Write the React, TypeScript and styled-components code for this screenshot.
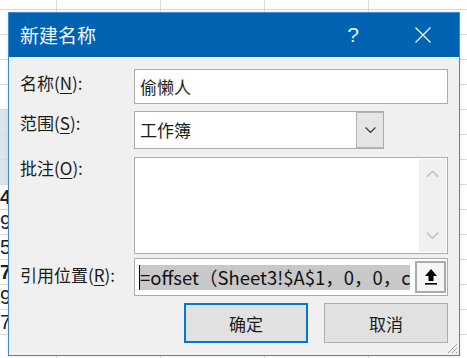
import React from 'react';
import styled, { createGlobalStyle } from 'styled-components';

const GlobalStyle = createGlobalStyle`
  html, body { margin: 0; padding: 0; background: #ffffff; }
  body { font-family: "Noto Sans CJK SC", "Noto Sans", sans-serif; }
  * { box-sizing: border-box; }
`;

const FONT = `"Noto Sans CJK SC", "Noto Sans", sans-serif`;

// 背景表格
const Screen = styled.div`
  position: relative;
  width: 467px;
  height: 358px;
  overflow: hidden;
  background: #ffffff;
`;

const Sheet = styled.div`
  display: flex;
  flex-direction: column;
`;

const SheetRow = styled.div<{ $h: number }>`
  display: grid;
  grid-template-columns: 57px 104px 104px 104px 110px;
  height: ${(p) => p.$h}px;
  border-bottom: 1px solid #dcdcdc;
`;

const SheetCell = styled.div<{ $shade?: boolean; $bold?: boolean }>`
  border-right: 1px solid #dcdcdc;
  background: ${(p) => (p.$shade ? '#dde4ec' : 'transparent')};
  font-family: "Liberation Sans", Arial, sans-serif;
  font-size: 20px;
  font-weight: ${(p) => (p.$bold ? 700 : 400)};
  color: #222;
  text-align: right;
  padding-right: 49px;
  line-height: 24px;
`;

// 对话框
const Dialog = styled.div`
  position: absolute;
  left: 8px;
  top: 12px;
  width: 452px;
  height: 344px;
  border: 1px solid #3d8ad2;
  background: #f0f0f0;
  display: flex;
  flex-direction: column;
  box-shadow: 0 0 4px rgba(0, 0, 0, 0.1);
`;

const TitleBar = styled.div`
  height: 44px;
  background: #0063b1;
  display: flex;
  align-items: center;
  padding-left: 11px;
  color: #ffffff;
  font-family: ${FONT};
`;

const Title = styled.div`
  flex: 1;
  font-size: 19px;
  line-height: 24px;
  color: #f2f7fc;
`;

const HelpButton = styled.div`
  width: 30px;
  margin-right: 32px;
  text-align: center;
  font-family: "Liberation Sans", Arial, sans-serif;
  font-size: 21px;
  line-height: 24px;
  color: #e8f0f8;
`;

const CloseButton = styled.div`
  width: 46px;
  height: 44px;
  margin-right: 13px;
  display: flex;
  align-items: center;
  justify-content: center;
`;

const Body = styled.div`
  position: relative;
  flex: 1;
  display: flex;
  flex-direction: column;
  padding: 12px 11px 0 11px;
`;

const FieldRow = styled.div<{ $top: number; $h: number }>`
  display: grid;
  grid-template-columns: 114px 314px;
  height: ${(p) => p.$h}px;
  margin-top: ${(p) => p.$top}px;
`;

const Label = styled.div<{ $pad: number }>`
  padding-top: ${(p) => p.$pad}px;
  font-family: ${FONT};
  font-size: 17px;
  line-height: 22px;
  color: #1b1b1b;
  white-space: nowrap;

  u {
    text-decoration: underline;
    text-underline-offset: 3px;
    text-decoration-thickness: 1px;
  }
`;

const TextBox = styled.div<{ $w?: number }>`
  width: ${(p) => (p.$w ? `${p.$w}px` : '100%')};
  height: 100%;
  background: #ffffff;
  border: 1px solid #acacac;
  display: flex;
  align-items: center;
  padding-left: 5px;
  font-family: ${FONT};
  font-size: 17px;
  color: #1b1b1b;
`;

const BoxText = styled.div`
  flex: 1;
  line-height: 22px;
`;

const DropButton = styled.div`
  width: 27px;
  height: 100%;
  background: #e5e5e5;
  border: 1px solid #b4b4b4;
  border-right: none;
  display: flex;
  align-items: center;
  justify-content: center;
`;

const CommentBox = styled.div`
  height: 100%;
  background: #ffffff;
  border: 1px solid #acacac;
  display: flex;
  justify-content: flex-end;
`;

const ScrollTrack = styled.div`
  width: 27px;
  margin: 1px;
  background: #f0f0f0;
  display: flex;
  flex-direction: column;
  justify-content: space-between;
  align-items: center;
  padding: 11px 0 13px;
`;

const RefBox = styled.div`
  height: 100%;
  background: #ffffff;
  border: 1px solid #acacac;
  display: flex;
  align-items: center;
  padding: 0 1px 0 4px;
`;

const RefText = styled.div`
  flex: 1;
  overflow: hidden;
  white-space: nowrap;
  height: 25px;
  display: flex;
  align-items: center;
  margin-right: 5px;
  font-family: ${FONT};
  font-size: 18.5px;
  color: #111;
`;

const Caret = styled.span`
  display: inline-block;
  flex: none;
  width: 1px;
  height: 25px;
  background: #000;
`;

const Selected = styled.span`
  background: #c8c8c8;
  line-height: 25px;
  height: 25px;
  padding-right: 10px;
`;

const CollapseButton = styled.div`
  width: 31px;
  height: 32px;
  background: #f6f6f6;
  border: 2px solid #ababab;
  display: flex;
  align-items: center;
  justify-content: center;
`;

const ButtonRow = styled.div`
  display: flex;
  justify-content: flex-end;
  gap: 16px;
  margin-top: 7px;
`;

const DialogButton = styled.div<{ $primary?: boolean }>`
  width: 124px;
  height: 40px;
  background: #e1e1e1;
  border: ${(p) => (p.$primary ? '2px solid #0078d7' : '1px solid #adadad')};
  display: flex;
  align-items: center;
  justify-content: center;
  font-family: ${FONT};
  font-size: 17px;
  color: #1b1b1b;
`;

const Grip = styled.svg`
  position: absolute;
  right: 1px;
  bottom: 1px;
`;

const sheetRows: { h: number; num?: string; bold?: boolean; shade?: boolean }[] = [
  { h: 10 },
  { h: 25 },
  { h: 25 },
  { h: 25 },
  { h: 25 },
  { h: 25, shade: true },
  { h: 25, shade: true },
  { h: 25, shade: true },
  { h: 25, num: '4', bold: true },
  { h: 25, num: '9' },
  { h: 25, num: '5' },
  { h: 25, num: '7', bold: true },
  { h: 25, num: '9' },
  { h: 25, num: '7' },
  { h: 25 },
];

const ChevronDown = ({ color = '#333', w = 10 }: { color?: string; w?: number }) => (
  <svg width={w} height={w / 2 + 1} viewBox="0 0 10 6">
    <polyline points="0.5,0.5 5,5 9.5,0.5" fill="none" stroke={color} strokeWidth="1.2" />
  </svg>
);

const ChevronUp = ({ color = '#333', w = 10 }: { color?: string; w?: number }) => (
  <svg width={w} height={w / 2 + 1} viewBox="0 0 10 6">
    <polyline points="0.5,5.5 5,1 9.5,5.5" fill="none" stroke={color} strokeWidth="1.2" />
  </svg>
);

const App = () => {
  return (
    <>
      <GlobalStyle />
      <Screen>
        <Sheet>
          {sheetRows.map((r, i) => (
            <SheetRow key={i} $h={r.h}>
              <SheetCell $shade={r.shade} $bold={r.bold}>
                {r.num}
              </SheetCell>
              <SheetCell />
              <SheetCell />
              <SheetCell />
              <SheetCell />
            </SheetRow>
          ))}
        </Sheet>

        <Dialog>
          <TitleBar>
            <Title>新建名称</Title>
            <HelpButton>?</HelpButton>
            <CloseButton>
              <svg width="16" height="16" viewBox="0 0 16 16">
                <path d="M0.5 0.5 L15.5 15.5 M15.5 0.5 L0.5 15.5" stroke="#f2f7fc" strokeWidth="1.3" />
              </svg>
            </CloseButton>
          </TitleBar>

          <Body>
            <FieldRow $top={0} $h={35}>
              <Label $pad={3}>
                名称(<u>N</u>):
              </Label>
              <TextBox>
                <BoxText>偷懒人</BoxText>
              </TextBox>
            </FieldRow>

            <FieldRow $top={7} $h={38}>
              <Label $pad={1}>
                范围(<u>S</u>):
              </Label>
              <TextBox $w={250}>
                <BoxText>工作簿</BoxText>
                <DropButton>
                  <ChevronDown color="#3a3a3a" w={11} />
                </DropButton>
              </TextBox>
            </FieldRow>

            <FieldRow $top={8} $h={97}>
              <Label $pad={-2}>
                批注(<u>O</u>):
              </Label>
              <CommentBox>
                <ScrollTrack>
                  <ChevronUp color="#c2c2c2" w={13} />
                  <ChevronDown color="#c2c2c2" w={13} />
                </ScrollTrack>
              </CommentBox>
            </FieldRow>

            <FieldRow $top={4} $h={38}>
              <Label $pad={6}>
                引用位置(<u>R</u>):
              </Label>
              <RefBox>
                <RefText>
                  <Caret />
                  <Selected>=offset（Sheet3!$A$1，0，0，c</Selected>
                </RefText>
                <CollapseButton>
                  <svg width="14" height="18" viewBox="0 0 14 18">
                    <path d="M7 1 L1 8 L4.5 8 L4.5 13 L9.5 13 L9.5 8 L13 8 Z" fill="#000" />
                    <rect x="1" y="15" width="12" height="1.6" fill="#000" />
                  </svg>
                </CollapseButton>
              </RefBox>
            </FieldRow>

            <ButtonRow>
              <DialogButton $primary>确定</DialogButton>
              <DialogButton>取消</DialogButton>
            </ButtonRow>

            <Grip width="12" height="12" viewBox="0 0 12 12">
              <path d="M11 2 L2 11 M11 6 L6 11 M11 10 L10 11" stroke="#9aa4ae" strokeWidth="1" />
            </Grip>
          </Body>
        </Dialog>
      </Screen>
    </>
  );
};

export default App;
